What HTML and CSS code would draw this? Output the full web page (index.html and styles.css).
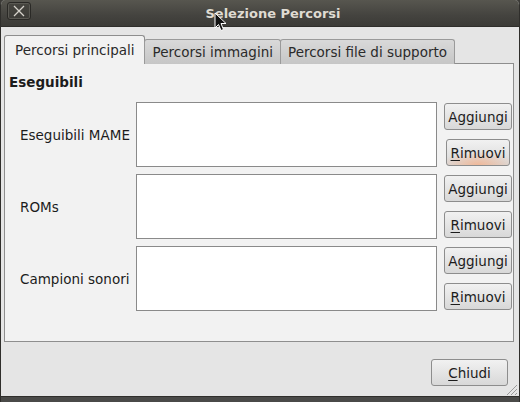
FILE: index.html
```html
<!DOCTYPE html>
<html>
<head>
<meta charset="utf-8">
<link rel="stylesheet" href="styles.css">
</head>
<body>
<div class="window">
  <div class="titlebar">
    <div class="close">
      <svg width="14" height="14" viewBox="0 0 14 14"><path d="M2 2 L12 12 M12 2 L2 12" stroke="#d6d3cc" stroke-width="1.3" fill="none"/></svg>
    </div>
    <div class="title">Selezione Percorsi</div>
  </div>
  <div class="content">
    <div class="tabs">
      <div class="tab active">Percorsi principali</div>
      <div class="tab">Percorsi immagini</div>
      <div class="tab">Percorsi file di supporto</div>
    </div>
    <div class="panel">
      <div class="section">Eseguibili</div>
      <div class="rows">
        <div class="label">Eseguibili MAME</div>
        <div class="field"></div>
        <div class="btns">
          <div class="btn">Aggiungi</div>
          <div class="btn glow"><u>R</u>imuovi</div>
        </div>
        <div class="label">ROMs</div>
        <div class="field"></div>
        <div class="btns">
          <div class="btn">Aggiungi</div>
          <div class="btn"><u>R</u>imuovi</div>
        </div>
        <div class="label">Campioni sonori</div>
        <div class="field"></div>
        <div class="btns">
          <div class="btn">Aggiungi</div>
          <div class="btn"><u>R</u>imuovi</div>
        </div>
      </div>
    </div>
    <div class="footer">
      <div class="btn chiudi"><u>C</u>hiudi</div>
    </div>
  </div>
  <div class="bottom"></div>
  <svg class="grip" width="14" height="14" viewBox="0 0 14 14">
    <path d="M13 3 L3 13 M13 7 L7 13 M13 11 L11 13" stroke="#9a9a9a" stroke-width="1" fill="none"/>
  </svg>
  <svg class="cursor" width="14" height="22" viewBox="0 0 14 22">
    <path d="M1 1 L1 16 L4.5 12.5 L7 18.5 L9.5 17.5 L7 11.5 L12 11.5 Z" fill="#111" stroke="#fff" stroke-width="1"/>
  </svg>
</div>
</body>
</html>
```
FILE: styles.css
```css
html, body {
  margin: 0;
  padding: 0;
  background: #3c3b37;
}
.window {
  position: relative;
  width: 520px;
  height: 402px;
  box-sizing: border-box;
  display: flex;
  flex-direction: column;
  background: #e5e5e5;
  border-left: 1px solid #2f2e2b;
  border-right: 1px solid #2f2e2b;
  border-radius: 5px 5px 0 0;
  overflow: hidden;
  font-family: "DejaVu Sans", sans-serif;
  font-size: 13.5px;
  color: #1c1c1c;
}
.titlebar {
  height: 27px;
  flex: none;
  display: flex;
  align-items: center;
  position: relative;
  background: linear-gradient(#57564f, #44433f 60%, #3c3b37);
  border-bottom: 1px solid #2f2e2b;
  box-sizing: border-box;
}
.close {
  position: absolute;
  left: 6px;
  top: 2px;
  width: 24px;
  height: 18px;
  box-sizing: border-box;
  border: 1px solid #2a2926;
  border-radius: 3px;
  background: linear-gradient(#46453f, #3c3b37);
  box-shadow: inset 0 0 0 1px #5a5953;
  display: flex;
  align-items: center;
  justify-content: center;
}
.title {
  flex: 1;
  text-align: center;
  font-weight: bold;
  color: #dfdbd2;
  font-size: 13px;
  padding-left: 26px;
}
.content {
  flex: 1;
  display: flex;
  flex-direction: column;
  padding: 8px 5px 0 3px;
}
.tabs {
  display: flex;
  align-items: flex-end;
  height: 29px;
  position: relative;
  z-index: 1;
  margin-bottom: -1px;
}
.tab {
  height: 25px;
  box-sizing: border-box;
  padding: 0 7px;
  display: flex;
  align-items: center;
  white-space: nowrap;
  border: 1px solid #9a9a9a;
  border-bottom: none;
  border-radius: 3px 3px 0 0;
  background: linear-gradient(#d9d9d9, #c6c6c6);
  color: #2a2a2a;
  margin-left: -1px;
}
.tab.active {
  height: 29px;
  margin-left: 0;
  padding: 0 10px;
  background: #f2f2f2;
  border-color: #8e8e8e;
}
.panel {
  height: 279px;
  box-sizing: border-box;
  background: #f2f2f2;
  border: 1px solid #8e8e8e;
  padding: 10px 1px 0 4px;
}
.section {
  font-weight: bold;
  height: 16px;
  line-height: 16px;
}
.rows {
  margin-top: 12px;
  display: grid;
  grid-template-columns: 120px 301px 68px;
  grid-auto-rows: 65px;
  column-gap: 7px;
  row-gap: 7px;
}
.label {
  display: flex;
  align-items: center;
  padding-left: 11px;
  white-space: nowrap;
}
.field {
  background: #ffffff;
  border: 1px solid #8a8a8a;
  box-sizing: border-box;
}
.btns {
  display: flex;
  flex-direction: column;
  justify-content: space-between;
  padding: 1px 0;
}
.btn {
  height: 27px;
  box-sizing: border-box;
  display: flex;
  align-items: center;
  justify-content: center;
  white-space: nowrap;
  border: 1px solid #8d8d8d;
  border-radius: 3px;
  background: linear-gradient(#f1f1f1, #d8d8d8);
  color: #1c1c1c;
}
.btn u {
  text-decoration-thickness: 1px;
  text-underline-offset: 2px;
}
.btn.glow {
  margin: 0 2px;
  background: radial-gradient(ellipse 60% 55% at 50% 100%, #f0b99a, rgba(240,185,154,0) 100%), linear-gradient(#f1f1f1, #d8d8d8);
}
.footer {
  flex: 1;
  display: flex;
  justify-content: flex-end;
  align-items: flex-start;
  padding-top: 17px;
  padding-right: 6px;
}
.chiudi {
  width: 77px;
}
.bottom {
  height: 5px;
  flex: none;
  background: #4a4a48;
  border-top: 1px solid #2f2e2b;
}
.grip {
  position: absolute;
  right: 1px;
  bottom: 6px;
}
.cursor {
  position: absolute;
  left: 213px;
  top: 12px;
}
```
